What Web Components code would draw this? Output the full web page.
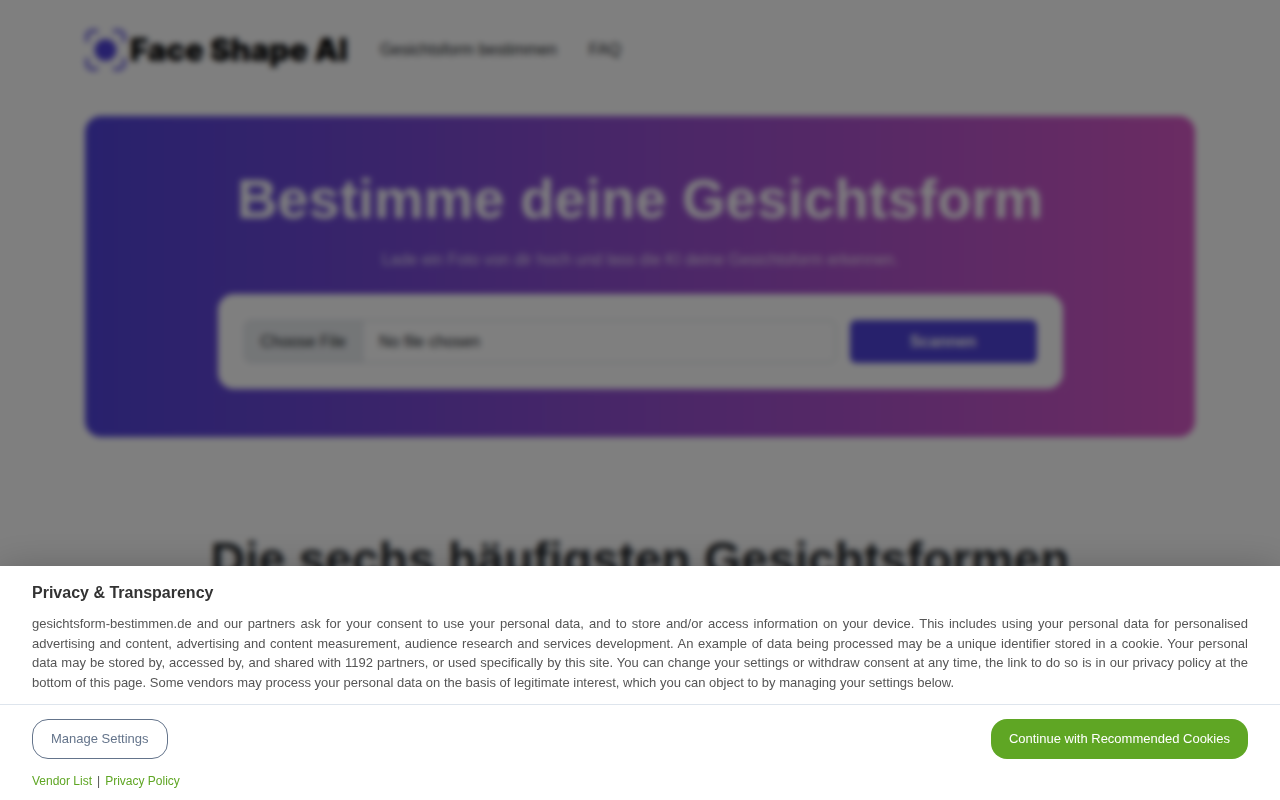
<!DOCTYPE html>
<html lang="de">
<head>
<meta charset="UTF-8">
<meta name="viewport" content="width=device-width, initial-scale=1.0">
<title>Face Shape AI</title>
<style>
    body {
        margin: 0;
        background: #fff;
        color: #212529;
        font-family: "Liberation Sans", Arial, sans-serif;
        font-size: 16px;
        line-height: 24px;
    }
</style>
</head>
<body>
<site-header>
    <a slot="nav" href="#scan">Gesichtsform bestimmen</a>
    <a slot="nav" href="#faq">FAQ</a>
</site-header>
<main>
    <hero-scan id="scan">
        <span slot="title">Bestimme deine Gesichtsform</span>
        <span slot="lead">Lade ein Foto von dir hoch und lass die KI deine Gesichtsform erkennen.</span>
    </hero-scan>
    <section-title>Die sechs häufigsten Gesichtsformen</section-title>
</main>
<consent-banner lang="en">
    <span slot="title">Privacy &amp; Transparency</span>
    gesichtsform-bestimmen.de and our partners ask for your consent to use your personal data, and to store and/or access information on your device. This includes using your personal data for personalised advertising and content, advertising and content measurement, audience research and services development. An example of data being processed may be a unique identifier stored in a cookie. Your personal data may be stored by, accessed by, and shared with 1192 partners, or used specifically by this site. You can change your settings or withdraw consent at any time, the link to do so is in our privacy policy at the bottom of this page. Some vendors may process your personal data on the basis of legitimate interest, which you can object to by managing your settings below.
</consent-banner>

<script>
class SiteHeader extends HTMLElement {
    connectedCallback() {
        this.attachShadow({ mode: 'open' });
        this.shadowRoot.innerHTML = `
            <style>
                :host {
                    display: block;
                    max-width: 1110px;
                    margin: 0 auto;
                    padding: 28px 16px;
                }

                header {
                    display: flex;
                    align-items: center;
                    gap: 32px;
                }

                .logo {
                    display: flex;
                    align-items: center;
                    gap: 4px;
                    color: #000;
                    font-family: Inter, sans-serif;
                    font-size: 31px;
                    font-weight: 900;
                    line-height: 44px;
                    text-decoration: none;
                }

                nav {
                    display: flex;
                    gap: 32px;
                }

                ::slotted(a) {
                    color: #212529;
                    text-decoration: none;
                }
            </style>

            <header>
                <a href="#home" class="logo">
                    <svg width="41" height="42" viewBox="0 0 41 42" fill="none" aria-hidden="true">
                        <path d="M2 13V7a5 5 0 0 1 5-5h6M28 2h6a5 5 0 0 1 5 5v6M39 29v6a5 5 0 0 1-5 5h-6M13 40H7a5 5 0 0 1-5-5v-6" stroke="#4f42d8" stroke-width="3"/>
                        <circle cx="20.5" cy="21" r="11" fill="#4f42d8"/>
                    </svg>
                    Face Shape AI
                </a>
                <nav><slot name="nav"></slot></nav>
            </header>
        `;
    }
}

class HeroScan extends HTMLElement {
    connectedCallback() {
        this.attachShadow({ mode: 'open' });
        this.shadowRoot.innerHTML = `
            <style>
                :host {
                    display: block;
                    box-sizing: border-box;
                    max-width: 1110px;
                    margin: 16px auto 0;
                    padding: 48px 16px;
                    border-radius: 16px;
                    background: linear-gradient(90deg, #5043da, #d658c6);
                    color: #fff;
                    text-align: center;
                }

                h1 {
                    margin: 0 0 14px;
                    font-size: 56px;
                    line-height: 70px;
                }

                p {
                    margin: 0 0 22px;
                    color: rgba(255, 255, 255, 0.75);
                }

                form {
                    display: flex;
                    gap: 14px;
                    box-sizing: border-box;
                    max-width: 845px;
                    margin: 0 auto;
                    padding: 26px;
                    border-radius: 16px;
                    background: #fff;
                }

                input {
                    flex: 1;
                    min-width: 0;
                    box-sizing: border-box;
                    height: 43px;
                    border: 1px solid #ced4da;
                    border-radius: 6px;
                    color: #212529;
                    font: inherit;
                    line-height: 41px;
                    overflow: hidden;
                }

                input::file-selector-button {
                    height: 41px;
                    margin: 0 16px 0 0;
                    padding: 0 16px;
                    border: 0;
                    border-right: 1px solid #ced4da;
                    background: #e9ecef;
                    color: #212529;
                    font: inherit;
                }

                button {
                    width: 187px;
                    border: 0;
                    border-radius: 6px;
                    background: #4f42d8;
                    color: #fff;
                    font: inherit;
                    font-weight: 700;
                }
            </style>

            <h1><slot name="title"></slot></h1>
            <p><slot name="lead"></slot></p>
            <form>
                <input type="file" accept="image/*" aria-label="Foto">
                <button type="button">Scannen</button>
            </form>
        `;
    }
}

class SectionTitle extends HTMLElement {
    connectedCallback() {
        this.attachShadow({ mode: 'open' });
        this.shadowRoot.innerHTML = `
            <style>
                :host {
                    display: block;
                    padding: 94px 16px 48px;
                    text-align: center;
                }

                h2 {
                    margin: 0;
                    font-size: 48px;
                    line-height: 58px;
                }
            </style>

            <h2><slot></slot></h2>
        `;
    }
}

class ConsentBanner extends HTMLElement {
    connectedCallback() {
        this.attachShadow({ mode: 'open' });
        this.shadowRoot.innerHTML = `
            <style>
                :host {
                    display: flex;
                    flex-direction: column;
                    justify-content: flex-end;
                    position: fixed;
                    inset: 0;
                    z-index: 1000;
                    background: rgba(0, 0, 0, 0.5);
                    backdrop-filter: blur(3px);
                }

                .panel {
                    background: #fff;
                    box-shadow: 0 8px 40px rgba(0, 0, 0, 0.3);
                    color: #555;
                    font-size: 13px;
                }

                .message {
                    padding: 16px 32px 12px;
                    border-bottom: 1px solid #dee5ed;
                }

                h2 {
                    margin: 0 0 10px;
                    color: #333;
                    font-size: 16px;
                    line-height: 22px;
                }

                p {
                    margin: 0;
                    line-height: 1.5;
                    text-align: justify;
                }

                .actions {
                    display: flex;
                    justify-content: space-between;
                    gap: 16px;
                    padding: 14px 32px;
                }

                button {
                    height: 40px;
                    padding: 0 18px;
                    border: 0;
                    border-radius: 16px;
                    background: #5fa624;
                    color: #fff;
                    font: inherit;
                    cursor: pointer;
                }

                button.outline {
                    border: 1px solid #64748b;
                    background: #fff;
                    color: #64748b;
                }

                .links {
                    display: flex;
                    gap: 5px;
                    padding: 0 32px 11px;
                    font-size: 12px;
                    line-height: 16px;
                }

                .links a {
                    color: #5fa624;
                    text-decoration: none;
                }
            </style>

            <div class="panel" role="dialog" aria-labelledby="title">
                <div class="message">
                    <h2 id="title"><slot name="title"></slot></h2>
                    <p><slot></slot></p>
                </div>
                <div class="actions">
                    <button type="button" class="outline">Manage Settings</button>
                    <button type="button">Continue with Recommended Cookies</button>
                </div>
                <div class="links">
                    <a href="#vendors">Vendor List</a>
                    <span>|</span>
                    <a href="#privacy">Privacy Policy</a>
                </div>
            </div>
        `;
    }
}

customElements.define('site-header', SiteHeader);
customElements.define('hero-scan', HeroScan);
customElements.define('section-title', SectionTitle);
customElements.define('consent-banner', ConsentBanner);
</script>
</body>
</html>
